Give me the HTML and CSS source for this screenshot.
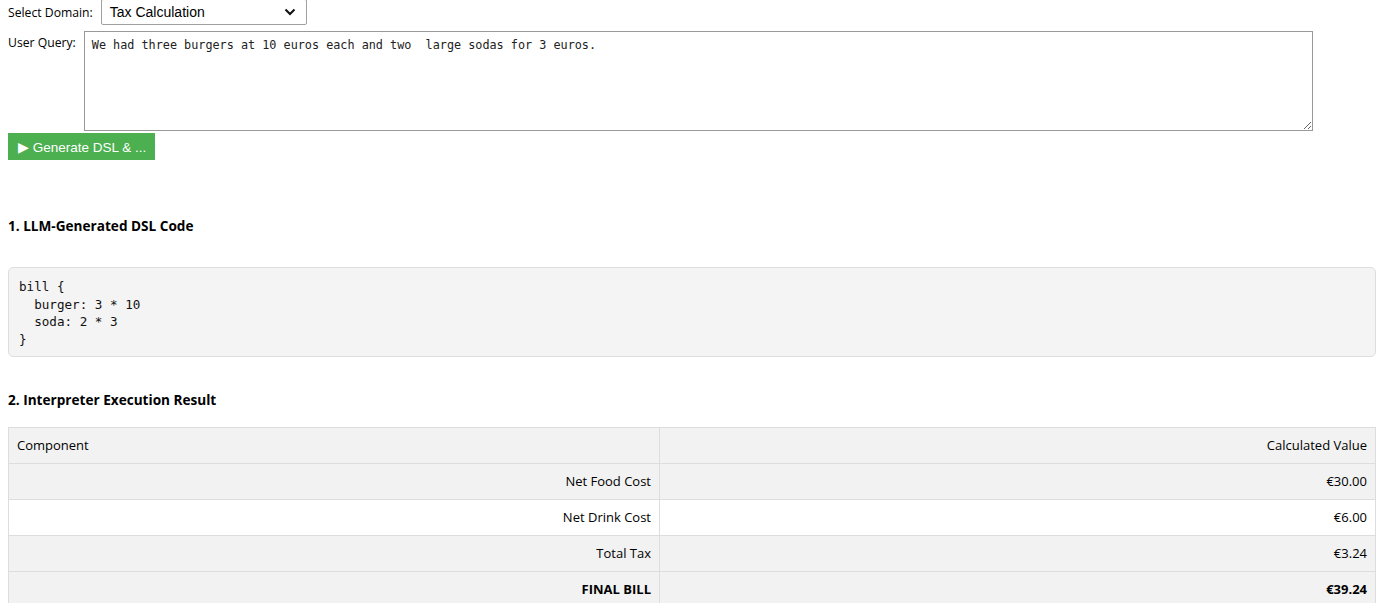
FILE: index.html
```html
<!DOCTYPE html>
<html>
<head>
<meta charset="utf-8">
<link rel="stylesheet" href="styles.css">
</head>
<body>
<div class="form">
  <div class="row">
    <label class="lbl">Select Domain:</label>
    <div class="select">
      <span>Tax Calculation</span>
      <svg class="chev" width="12" height="8" viewBox="0 0 12 8"><path d="M1.5 1.5 L6 6 L10.5 1.5" fill="none" stroke="#111" stroke-width="2"/></svg>
    </div>
  </div>
  <div class="row top">
    <label class="lbl lbl-q">User Query:</label>
    <textarea class="query">We had three burgers at 10 euros each and two  large sodas for 3 euros.</textarea>
  </div>
  <button class="run">&#9654; Generate DSL &amp; ...</button>
</div>

<section class="results">
  <h3 class="head">1. LLM-Generated DSL Code</h3>
  <pre class="code">bill {
  burger: 3 * 10
  soda: 2 * 3
}</pre>

  <h3 class="head head2">2. Interpreter Execution Result</h3>
  <table class="result">
    <thead>
      <tr><th class="left">Component</th><th>Calculated Value</th></tr>
    </thead>
    <tbody>
      <tr class="grey"><td>Net Food Cost</td><td>€30.00</td></tr>
      <tr><td>Net Drink Cost</td><td>€6.00</td></tr>
      <tr class="grey"><td>Total Tax</td><td>€3.24</td></tr>
      <tr class="grey final"><td>FINAL BILL</td><td>€39.24</td></tr>
    </tbody>
  </table>
</section>
</body>
</html>
```

FILE: styles.css
```css
html, body { background: #fff; }
body {
  margin: 0 7px 0 8px;
  font-family: "Open Sans", "Noto Sans", sans-serif;
  font-size: 13px;
  color: #000;
}
.form {
  display: flex;
  flex-direction: column;
  align-items: flex-start;
  gap: 6px;
}
.row {
  display: flex;
  align-items: center;
  gap: 8px;
}
.row.top { align-items: flex-start; }
.lbl { line-height: 18px; font-size: 12.2px; }
.lbl-q { padding-top: 3px; }
.select {
  box-sizing: border-box;
  width: 206px;
  height: 26px;
  border: 1px solid #a0a0a0;
  border-radius: 2px;
  display: flex;
  align-items: center;
  justify-content: space-between;
  padding: 0 10px 0 8px;
  font-family: "Liberation Sans", Arial, sans-serif;
  font-size: 14px;
  margin-top: -1px;
}
.chev { display: block; }
.query {
  box-sizing: border-box;
  width: 1229px;
  height: 100px;
  border: 1px solid #999;
  padding: 6px 7px;
  font-family: "DejaVu Sans Mono", monospace;
  font-size: 11.8px;
  line-height: 14px;
  resize: vertical;
  color: #222;
  margin: 0;
}
.run {
  margin-top: -4px;
  background: #4caf50;
  color: #fff;
  border: none;
  height: 27px;
  width: 147px;
  padding: 0 0 0 10px;
  text-align: left;
  font-family: "Liberation Sans", Arial, sans-serif;
  font-size: 13.5px;
}
.results { margin-top: 57px; }
.head {
  font-size: 13.6px;
  font-weight: bold;
  line-height: 18px;
  margin: 0 0 32px 0;
}
.head2 { margin-top: 34px; margin-bottom: 18px; }
.code {
  box-sizing: border-box;
  margin: 0;
  background: #f4f4f4;
  border: 1px solid #ddd;
  border-radius: 5px;
  padding: 10px 10px 8px;
  font-family: "DejaVu Sans Mono", monospace;
  font-size: 12.6px;
  line-height: 17.5px;
  color: #111;
}
.result {
  width: 100%;
  border-collapse: collapse;
  font-size: 13px;
}
.result th, .result td {
  border: 1px solid #ddd;
  padding: 8px;
  line-height: 19px;
  text-align: right;
  font-weight: normal;
}
.result th { background: #f2f2f2; }
.result th.left { text-align: left; }
.result th:first-child, .result td:first-child { width: 634px; }
.result tr.grey td { background: #f2f2f2; }
.result tr.final td { font-weight: bold; }
```
